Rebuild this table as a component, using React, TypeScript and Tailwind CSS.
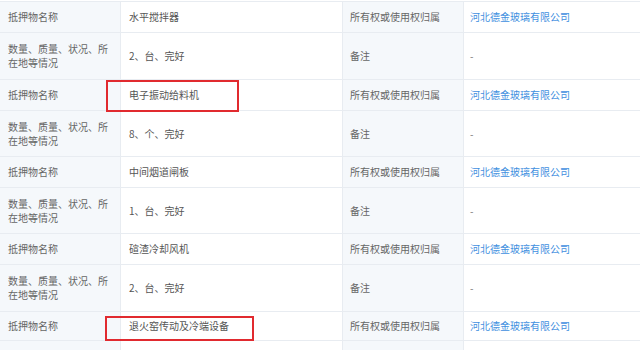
import React from "react";

type Row = { h: number; l1: string; v1: string; l2: string; v2: string; link?: boolean; box?: { left: number; top: number; w: number; h: number } };

const rows: Row[] = [
  { h: 31, l1: "抵押物名称", v1: "水平搅拌器", l2: "所有权或使用权归属", v2: "河北德金玻璃有限公司", link: true },
  { h: 47, l1: "数量、质量、状况、所在地等情况", v1: "2、台、完好", l2: "备注", v2: "-" },
  { h: 31, l1: "抵押物名称", v1: "电子振动给料机", l2: "所有权或使用权归属", v2: "河北德金玻璃有限公司", link: true, box: { left: -15, top: 0, w: 133, h: 32 } },
  { h: 46, l1: "数量、质量、状况、所在地等情况", v1: "8、个、完好", l2: "备注", v2: "-" },
  { h: 31, l1: "抵押物名称", v1: "中间烟道闸板", l2: "所有权或使用权归属", v2: "河北德金玻璃有限公司", link: true },
  { h: 46, l1: "数量、质量、状况、所在地等情况", v1: "1、台、完好", l2: "备注", v2: "-" },
  { h: 31, l1: "抵押物名称", v1: "碹渣冷却风机", l2: "所有权或使用权归属", v2: "河北德金玻璃有限公司", link: true },
  { h: 47, l1: "数量、质量、状况、所在地等情况", v1: "2、台、完好", l2: "备注", v2: "-" },
  { h: 29, l1: "抵押物名称", v1: "退火窑传动及冷端设备", l2: "所有权或使用权归属", v2: "河北德金玻璃有限公司", link: true, box: { left: -16, top: 4, w: 149, h: 25 } },
  { h: 31, l1: "", v1: "", l2: "", v2: "" },
];

export default function App() {
  return (
    <div
      className="w-[640px] h-[350px] overflow-hidden bg-white pt-[1px]"
      style={{ fontFamily: '"Noto Sans CJK SC", "Noto Sans", sans-serif' }}
    >
      <div className="border-t border-[#e8ecf1] text-[10px] leading-[14px]">
        {rows.map((r, i) => (
          <div key={i} className="flex border-b border-[#e8ecf1]" style={{ height: r.h }}>
            <div className="w-[121px] shrink-0 bg-[#f5f8fb] border-r border-[#e8ecf1] px-2 flex items-center text-[#666]">
              <span>{r.l1}</span>
            </div>
            <div className="relative w-[222px] shrink-0 border-r border-[#e8ecf1] pl-2 flex items-center text-[#555]">
              <span>{r.v1}</span>
              {r.box && (
                <div
                  className="absolute border-2 border-[#e12a2f]"
                  style={{ left: r.box.left, top: r.box.top, width: r.box.w, height: r.box.h }}
                />
              )}
            </div>
            <div className="w-[121px] shrink-0 bg-[#f5f8fb] border-r border-[#e8ecf1] pl-[7px] flex items-center text-[#666]">
              <span>{r.l2}</span>
            </div>
            <div className={`flex-1 pl-[6px] flex items-center ${r.link ? "text-[#3f8fe0]" : "text-[#777]"}`}>
              <span>{r.v2}</span>
            </div>
          </div>
        ))}
      </div>
    </div>
  );
}
